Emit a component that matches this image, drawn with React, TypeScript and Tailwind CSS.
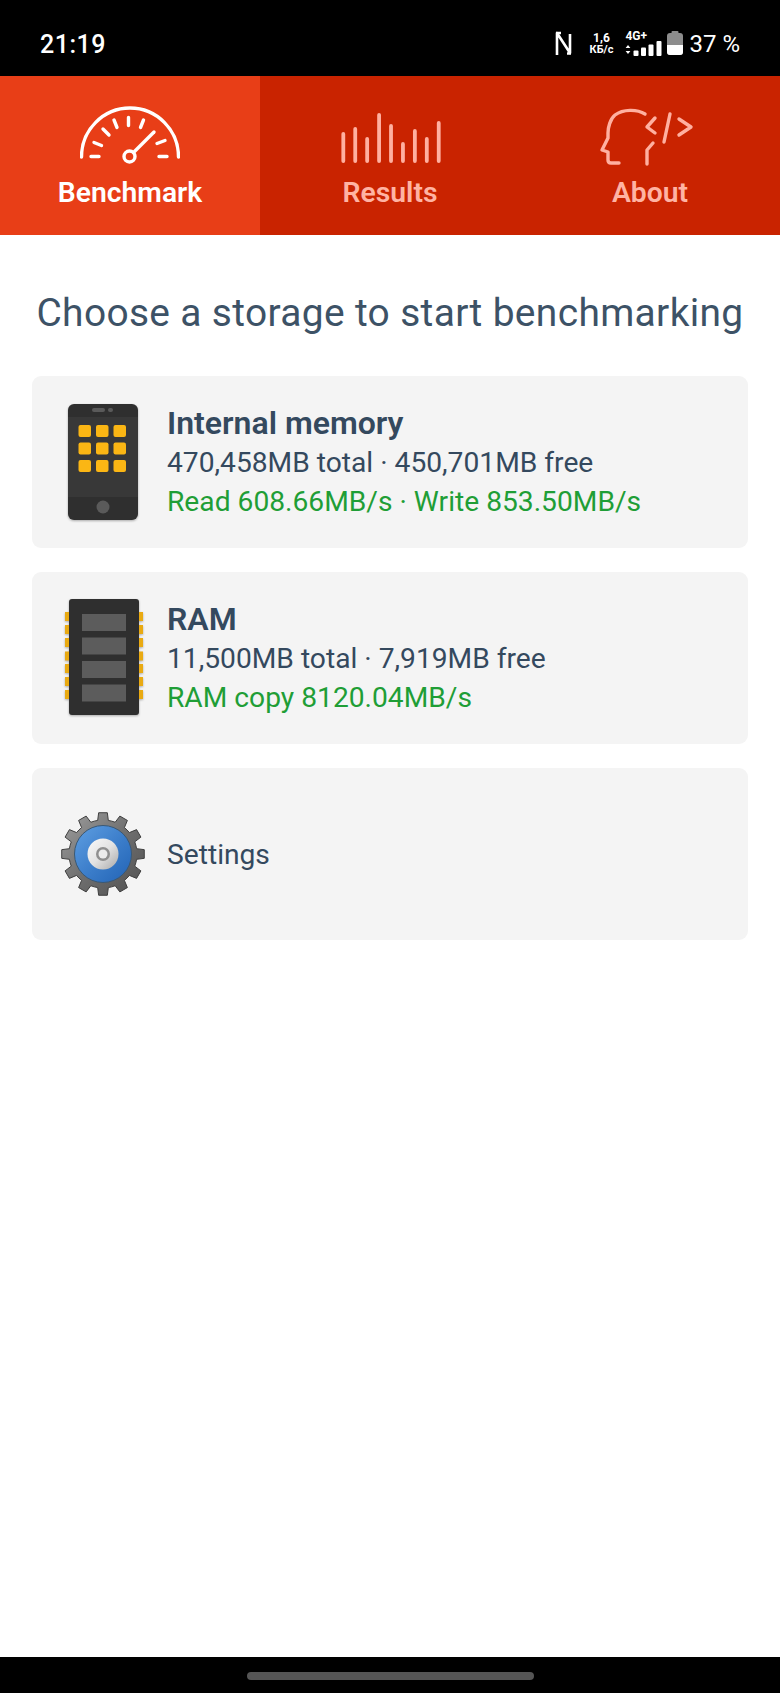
const GEAR_TEETH = 12;

// 齿轮外形：按齿数算出多边形顶点
function gearPoints(cx: number, cy: number, outer: number, inner: number) {
  const pts: string[] = [];
  const step = (Math.PI * 2) / GEAR_TEETH;
  for (let i = 0; i < GEAR_TEETH; i++) {
    const a = i * step - Math.PI / 2;
    const offsets: [number, number][] = [
      [-0.5, inner],
      [-0.3, inner],
      [-0.2, outer],
      [0.2, outer],
      [0.3, inner],
    ];
    for (const [o, r] of offsets) {
      const t = a + o * step;
      pts.push(`${(cx + Math.cos(t) * r).toFixed(2)},${(cy + Math.sin(t) * r).toFixed(2)}`);
    }
  }
  return pts.join(" ");
}

const SpeedIcon = () => (
  <svg width="100" height="60" viewBox="0 0 100 60" fill="none" stroke="#fff" strokeLinecap="round" strokeWidth="3.4" className="mt-[30px]">
    <path d="M1.5 51 A48.5 49 0 0 1 98.5 51" />
    <path d="M11 50.5h8M14 36.5l7.5 3M23 23l6 6M34 14l3 7.5M48.5 11.5v8M63.5 14l-3 7.5M85 34.5l-8 3M87 50.5h-8" />
    <path d="M53.5 46.5 L74 26" />
    <circle cx="49.5" cy="50.5" r="5.5" />
  </svg>
);

const BarsIcon = () => {
  const tops = [32, 27, 37, 13, 24, 42, 29, 37, 21];
  return (
    <svg width="110" height="70" viewBox="0 0 110 70" fill="none" stroke="#ffb0a0" strokeLinecap="round" strokeWidth="3.8" className="mt-[24px]">
      {tops.map((t, i) => (
        <line key={i} x1={8.3 + i * 11.93} x2={8.3 + i * 11.93} y1={t + 2} y2={61} />
      ))}
    </svg>
  );
};

const HeadCodeIcon = () => (
  <svg width="110" height="70" viewBox="0 0 110 70" fill="none" stroke="#ffb0a0" strokeLinecap="round" strokeLinejoin="round" strokeWidth="3.4" className="mt-[24px] mr-[10px]">
    <path d="M55 14C47 9 33 9 25 15C20 19 18 28 18 33L18 38L12 50L18 52L18 60Q18 63 21 63L29 63" />
    <path d="M63 43L57 50L57 64" />
    <path d="M65 18L57 27L65 33M80 14L74 42M89 19L101 27L89 35" />
  </svg>
);

const PhoneIcon = () => (
  <svg width="72" height="120" viewBox="0 0 72 120" className="mt-[2px] drop-shadow-[0_1px_1px_rgba(0,0,0,0.3)]">
    <rect x="1" y="1" width="70" height="116" rx="6" fill="#2f2f2f" />
    <rect x="1" y="14" width="70" height="80" fill="#383838" />
    <rect x="25" y="5" width="13" height="4" rx="2" fill="#5a5a5a" />
    <rect x="41" y="5" width="5" height="4" rx="2" fill="#5a5a5a" />
    {[23, 40.5, 58].map((y) =>
      [11.5, 29, 46.5].map((x) => <rect key={`${x}-${y}`} x={x} y={y - 1} width="12.5" height="12" rx="2" fill="#fbb614" />),
    )}
    <circle cx="36" cy="104" r="6.5" fill="#5a5a5a" />
  </svg>
);

const RamIcon = () => (
  <svg width="78" height="120" viewBox="0 0 78 120" className="ml-[1px] drop-shadow-[0_1px_1px_rgba(0,0,0,0.3)]">
    {[14, 27, 40, 53.5, 66, 79, 92].map((y) => (
      <g key={y} fill="#e9aa12">
        <rect x="0" y={y} width="5" height="9" />
        <rect x="73" y={y} width="5" height="9" />
      </g>
    ))}
    <rect x="4" y="1" width="70" height="116" rx="3" fill="#2f2f2f" />
    {[16, 39.5, 63, 86.5].map((y) => (
      <rect key={y} x="17" y={y} width="44" height="17" fill="#5c5c5c" />
    ))}
  </svg>
);

const GearIcon = () => (
  <svg width="86" height="86" viewBox="0 0 86 86">
    <defs>
      <linearGradient id="gearMetal" x1="0" y1="0" x2="1" y2="1">
        <stop offset="0" stopColor="#a0a0a0" />
        <stop offset="0.5" stopColor="#6f6f6f" />
        <stop offset="1" stopColor="#4f4f4f" />
      </linearGradient>
      <linearGradient id="gearBlue" x1="0" y1="0" x2="1" y2="1">
        <stop offset="0" stopColor="#5f9fe2" />
        <stop offset="0.55" stopColor="#3a7cc9" />
        <stop offset="1" stopColor="#2263b5" />
      </linearGradient>
      <linearGradient id="gearDisc" x1="0" y1="0" x2="1" y2="1">
        <stop offset="0" stopColor="#fafafa" />
        <stop offset="0.5" stopColor="#e2e2e2" />
        <stop offset="1" stopColor="#a8a8a8" />
      </linearGradient>
    </defs>
    <polygon points={gearPoints(43, 43, 41.5, 34)} fill="url(#gearMetal)" stroke="#3f3f3f" strokeWidth="1" strokeLinejoin="round" />
    <circle cx="43" cy="43" r="28.5" fill="url(#gearBlue)" stroke="#3a5874" strokeWidth="1" />
    <circle cx="43" cy="43" r="15.5" fill="url(#gearDisc)" />
    <circle cx="43" cy="43" r="7" fill="#8f8f8f" />
    <circle cx="43" cy="43" r="4.5" fill="#ececec" />
  </svg>
);

const StatusBar = () => (
  <div className="flex h-[76px] items-center justify-between bg-black px-[40px] pt-[11px] text-white">
    <span className="mt-[2px] text-[25px] leading-none font-medium tracking-[0.5px]">21:19</span>
    <div className="flex items-center">
      <svg width="17" height="25" viewBox="0 0 17 25" fill="none" stroke="#fff" strokeWidth="2.6" strokeLinejoin="round">
        <path d="M2 24V2L15 22V3" />
        <path d="M1 2h5M16 22.5h-4" />
      </svg>
      <div className="ml-[16px] flex w-[26px] flex-col items-center text-[12px] leading-[12px] font-bold">
        <span>1,6</span>
        <span className="text-[11px]">КБ/с</span>
      </div>
      <div className="ml-[11px] flex flex-col items-start">
        <span className="text-[12px] leading-[12px] font-bold">4G+</span>
        <svg width="37" height="16" viewBox="0 0 37 16" fill="#fff" className="mt-[-1px]">
          <path d="M3 4 L5.4 7 H0.6Z M3 13 L5.4 10 H0.6Z" />
          <rect x="8.5" y="9.5" width="5" height="5.5" rx="1" />
          <rect x="16" y="6.5" width="5" height="8.5" rx="1" />
          <rect x="23.5" y="3.5" width="5" height="11.5" rx="1" />
          <rect x="31.5" y="0" width="5" height="15" rx="1" />
        </svg>
      </div>
      <svg width="16" height="25" viewBox="0 0 16 25" className="ml-[5px]">
        <rect x="4.5" y="0" width="7" height="2.5" rx="1" fill="#8d8d8d" />
        <rect x="0" y="2" width="16" height="22" rx="3" fill="#8d8d8d" />
        <path d="M0 14H16V21A3 3 0 0 1 13 24H3A3 3 0 0 1 0 21Z" fill="#fff" />
      </svg>
      <span className="ml-[6px] text-[24px] leading-none">37 %</span>
    </div>
  </div>
);

const tabs = [
  { label: "Benchmark", icon: <SpeedIcon />, active: true },
  { label: "Results", icon: <BarsIcon />, active: false },
  { label: "About", icon: <HeadCodeIcon />, active: false },
];

const TabBar = () => (
  <div className="flex h-[159px] bg-[#c92300]">
    {tabs.map((tab) => (
      <div
        key={tab.label}
        className={`flex flex-1 flex-col items-center ${tab.active ? "bg-[#e83e17] text-white" : "text-[#ffb3a3]"}`}
      >
        <div className="flex h-[88px] items-start justify-center">{tab.icon}</div>
        <span className="mt-[13px] text-[28.3px] leading-[32px] font-semibold">{tab.label}</span>
      </div>
    ))}
  </div>
);

const StorageCard = ({
  icon,
  title,
  info,
  speed,
}: {
  icon: React.ReactNode;
  title?: string;
  info: string;
  speed?: string;
}) => (
  <div className="flex h-[172px] items-center rounded-[9px] bg-[#f4f4f4] pl-[21px]">
    <div className="flex w-[100px] shrink-0 items-center justify-center">{icon}</div>
    <div className="ml-[14px] flex flex-col text-[28.2px] leading-[39px] text-[#34495e]">
      {title && <span className="text-[32px] font-semibold">{title}</span>}
      <span>{info}</span>
      {speed && <span className="text-[#1f9e36]">{speed}</span>}
    </div>
  </div>
);

export default function App() {
  return (
    <div className="flex h-[1693px] w-[780px] flex-col bg-white font-['Roboto',sans-serif]">
      <StatusBar />
      <TabBar />
      <div className="flex-1 px-[32px]">
        <h1 className="mt-[55px] mb-[40px] text-center text-[38.9px] leading-[46px] font-normal tracking-[0.35px] whitespace-nowrap text-[#3d5266]">
          Choose a storage to start benchmarking
        </h1>
        <div className="flex flex-col gap-[24px]">
          <StorageCard
            icon={<PhoneIcon />}
            title="Internal memory"
            info="470,458MB total · 450,701MB free"
            speed="Read 608.66MB/s · Write 853.50MB/s"
          />
          <StorageCard
            icon={<RamIcon />}
            title="RAM"
            info="11,500MB total · 7,919MB free"
            speed="RAM copy 8120.04MB/s"
          />
          <StorageCard icon={<GearIcon />} info="Settings" />
        </div>
      </div>
      <div className="flex h-[36px] items-center justify-center bg-black pt-[1px]">
        <div className="h-[8px] w-[287px] rounded-full bg-[#555]" />
      </div>
    </div>
  );
}
